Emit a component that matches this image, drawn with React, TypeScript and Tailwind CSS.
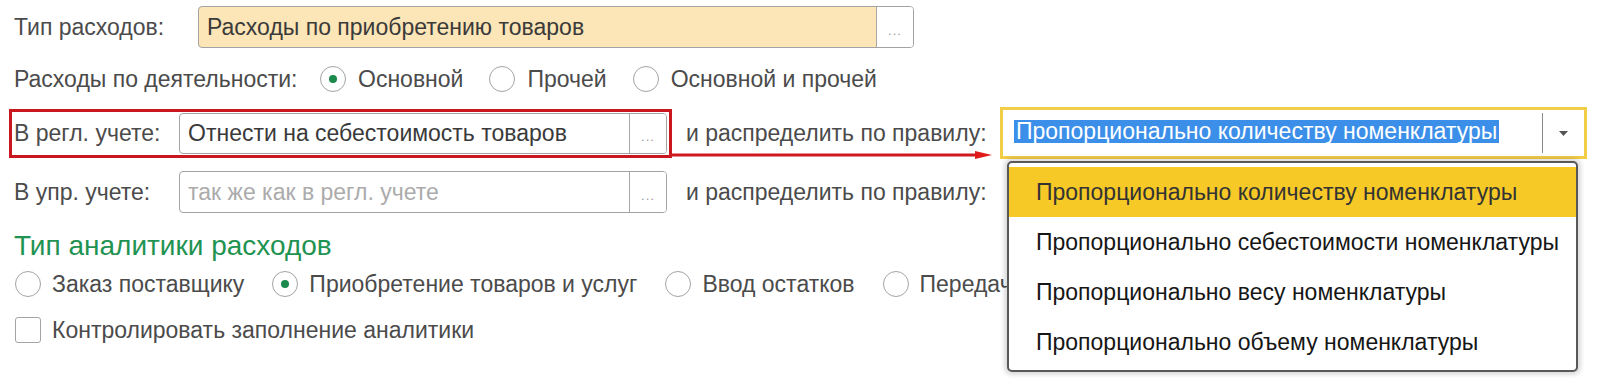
import React from "react";

const labelCls = "text-[23px] leading-[26px] text-[#4b4b4b] whitespace-nowrap";

function DotsButton() {
  return (
    <div className="w-[37px] h-full flex items-center justify-center border-l border-[#a9a9a9] bg-white">
      <span className="text-[13px] leading-none text-[#9a9a9a] pt-[6px] tracking-[1px]">...</span>
    </div>
  );
}

function PickField({
  value,
  placeholder,
  width,
  height,
  bg = "bg-white",
}: {
  value?: string;
  placeholder?: string;
  width: string;
  height: string;
  bg?: string;
}) {
  return (
    <div className={`${width} ${height} flex border border-[#a3a3a3] rounded-[4px] overflow-hidden ${bg}`}>
      <div className="flex-1 flex items-center pl-[8px]">
        {value ? (
          <span className="text-[23px] leading-[26px] text-[#3a3a3a] whitespace-nowrap">{value}</span>
        ) : (
          <span className="text-[23px] leading-[26px] text-[#ababab] whitespace-nowrap">{placeholder}</span>
        )}
      </div>
      <DotsButton />
    </div>
  );
}

function Radio({ checked, label, gap }: { checked?: boolean; label: string; gap: string }) {
  return (
    <div className={`flex items-center shrink-0 ${gap}`}>
      <div className="w-[26px] h-[26px] rounded-full border-[1.5px] border-[#a4a4a4] bg-white flex items-center justify-center">
        {checked && <div className="w-[8px] h-[8px] rounded-full bg-[#1b8a4c]" />}
      </div>
      <span className={labelCls}>{label}</span>
    </div>
  );
}

const rules = [
  "Пропорционально количеству номенклатуры",
  "Пропорционально себестоимости номенклатуры",
  "Пропорционально весу номенклатуры",
  "Пропорционально объему номенклатуры",
];

export default function App() {
  return (
    <div
      className="relative w-[1600px] h-[388px] bg-white overflow-hidden"
      style={{ fontFamily: '"Liberation Sans", Arial, sans-serif' }}
    >
      {/* Тип расходов */}
      <div className="flex items-center pl-[14px] mt-[6px] h-[42px]">
        <div className={`${labelCls} w-[184px]`}>Тип расходов:</div>
        <PickField value="Расходы по приобретению товаров" width="w-[716px]" height="h-[42px]" bg="bg-[#fce5b6]" />
      </div>

      {/* Расходы по деятельности */}
      <div className="flex items-center pl-[14px] mt-[10px] h-[42px]">
        <div className={`${labelCls} w-[306px]`}>Расходы по деятельности:</div>
        <div className="flex items-center gap-[26px]">
          <Radio checked label="Основной" gap="gap-[12px]" />
          <Radio label="Прочей" gap="gap-[12px]" />
          <Radio label="Основной и прочей" gap="gap-[12px]" />
        </div>
      </div>

      {/* В регл. учете */}
      <div className="flex items-center pl-[9px] mt-[7px] h-[52px]">
        <div className="w-[663px] h-[49px] border-[3px] border-[#c8171e] flex items-center px-[2px]">
          <div className={`${labelCls} w-[165px]`}>В регл. учете:</div>
          <PickField value="Отнести на себестоимость товаров" width="w-[488px]" height="h-[41px]" />
        </div>
        <div className={`${labelCls} ml-[14px] w-[314px]`}>и распределить по правилу:</div>
        <div className="w-[587px] h-[52px] border-[3px] border-[#f2cd48] bg-white flex items-center">
          <div className="flex-1 pl-[11px]">
            <span className="text-[23px] leading-[23px] inline-block bg-[#3b8fe9] text-white px-[2px] whitespace-nowrap">
              Пропорционально количеству номенклатуры
            </span>
          </div>
          <div className="w-[42px] h-[40px] border-l border-[#8a8a8a] flex items-center justify-center">
            <svg width="9" height="5" viewBox="0 0 9 5">
              <polygon points="0,0 9,0 4.5,5" fill="#555" />
            </svg>
          </div>
        </div>
      </div>

      {/* В упр. учете */}
      <div className="flex items-center pl-[14px] mt-[12px] h-[42px]">
        <div className={`${labelCls} w-[165px]`}>В упр. учете:</div>
        <PickField placeholder="так же как в регл. учете" width="w-[488px]" height="h-[42px]" />
        <div className={`${labelCls} ml-[19px]`}>и распределить по правилу:</div>
      </div>

      {/* Тип аналитики расходов */}
      <div className="pl-[14px] mt-[17px] h-[32px] text-[28px] leading-[32px] text-[#1f9352] whitespace-nowrap">
        Тип аналитики расходов
      </div>

      {/* the last option runs under the open list */}
      <div className="flex items-center pl-[15px] mt-[7px] h-[30px] gap-[28px]">
        <Radio label="Заказ поставщику" gap="gap-[11px]" />
        <Radio checked label="Приобретение товаров и услуг" gap="gap-[11px]" />
        <Radio label="Ввод остатков" gap="gap-[11px]" />
        <Radio label="Передача" gap="gap-[11px]" />
      </div>

      <div className="flex items-center pl-[15px] mt-[16px] h-[30px] gap-[11px]">
        <div className="w-[26px] h-[26px] rounded-[3px] border-[1.5px] border-[#a4a4a4] bg-white" />
        <span className={labelCls}>Контролировать заполнение аналитики</span>
      </div>

      {/* annotation arrow */}
      <svg className="absolute left-[669px] top-[149px]" width="326" height="12" viewBox="0 0 326 12">
        <line x1="0" y1="6" x2="310" y2="6" stroke="#cf1a1f" strokeWidth="3" />
        <polygon points="306,2 323,6 306,10" fill="#e21a1a" />
      </svg>

      {/* dropdown list */}
      <div className="absolute left-[1007px] top-[161px] w-[571px] h-[211px] bg-white border-2 border-[#585858] rounded-[5px] shadow-[0_0_4px_3px_rgba(0,0,0,0.14)] pt-[4px] z-10">
        {rules.map((r, i) => (
          <div
            key={r}
            className={`h-[50px] flex items-center pl-[27px] text-[23px] whitespace-nowrap ${
              i === 0 ? "bg-[#f6c927] text-[#333]" : "text-[#161616]"
            }`}
          >
            {r}
          </div>
        ))}
      </div>
    </div>
  );
}
